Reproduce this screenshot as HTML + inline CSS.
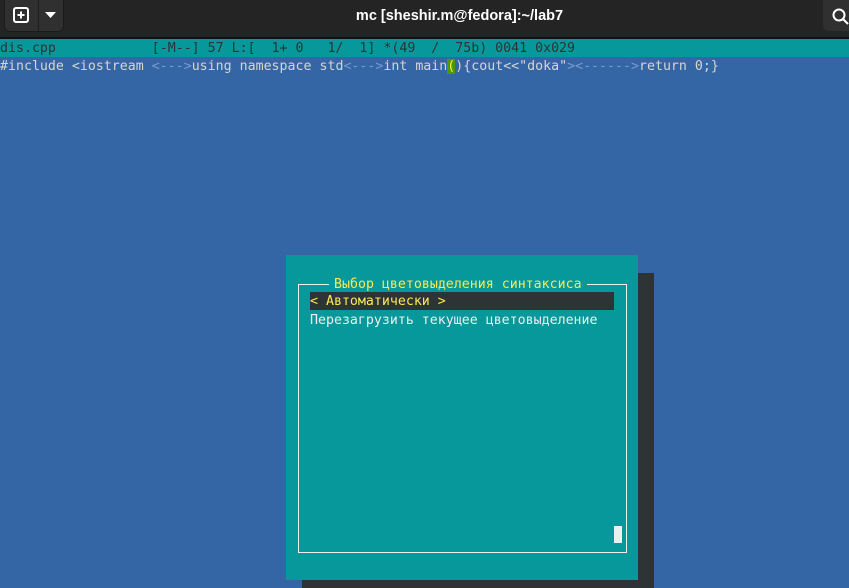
<!DOCTYPE html>
<html><head><meta charset="utf-8"><style>
body{margin:0;width:849px;height:588px;overflow:hidden;background:#3465a4;position:relative;font-family:"DejaVu Sans Mono","Liberation Mono",monospace;font-size:13.27px;}
.hdr{position:absolute;left:0;top:0;width:849px;height:37px;background:#242424;border-bottom:2px solid #111;}
.t{position:absolute;white-space:pre;line-height:18px;}
.ab{color:#729fcf}
</style></head><body>
<div class="hdr">
 <div style="position:absolute;left:4px;top:0;width:58px;height:31px;background:#303030;border-radius:0 0 6px 6px;border:1px solid #1a1a1a;border-top:none"></div>
 <div style="position:absolute;left:38px;top:0;width:1px;height:31px;background:#1e1e1e"></div>
 <svg style="position:absolute;left:13px;top:7px" width="16" height="16"><rect x="1" y="1" width="14" height="14" rx="2" fill="none" stroke="#fff" stroke-width="2"/><path d="M8 4.5v7M4.5 8h7" stroke="#fff" stroke-width="2"/></svg>
 <svg style="position:absolute;left:45px;top:12px" width="12" height="7"><path d="M0 0h11L5.5 6z" fill="#fff"/></svg>
 <div style="position:absolute;left:0;width:849px;top:8px;text-align:center;font-family:'Liberation Sans',sans-serif;font-weight:bold;font-size:14.5px;color:#fff;padding-left:70px;box-sizing:border-box;">mc [sheshir.m@fedora]:~/lab7</div>
 <div style="position:absolute;left:823px;top:0;width:40px;height:31px;background:#303030;border-radius:0 0 0 6px"></div>
 <svg style="position:absolute;left:832px;top:8px" width="17" height="17"><circle cx="7" cy="7" r="5.5" fill="none" stroke="#fff" stroke-width="2"/><path d="M11 11l5 5" stroke="#fff" stroke-width="2"/></svg>
</div>
<div style="position:absolute;left:0;top:39px;width:849px;height:18px;background:#06989a"></div>
<div class="t" style="left:0;top:40px;color:#2e3436">dis.cpp            [-M--] 57 L:[  1+ 0   1/  1] *(49  /  75b) 0041 0x029</div>
<div class="t" style="left:0;top:58px;color:#d3d7cf">#include &lt;iostream <span class="ab">&lt;---&gt;</span>using namespace std<span class="ab">&lt;---&gt;</span>int main<span style="background:#4e9a06;color:#fce94f">(</span>){cout&lt;&lt;"doka"<span class="ab">&gt;&lt;------&gt;</span>return 0;}</div>
<div style="position:absolute;left:302px;top:273px;width:352px;height:315px;background:#2e3436"></div>
<div style="position:absolute;left:286px;top:255px;width:352px;height:325px;background:#06989a"></div>
<div style="position:absolute;left:298px;top:284px;width:327px;height:267px;border:1.5px solid #eeeeec;box-sizing:content-box"></div>
<div class="t" style="left:329px;top:276px;background:#06989a;color:#fce94f;padding:0 5px">Выбор цветовыделения синтаксиса</div>
<div style="position:absolute;left:310px;top:292px;width:304px;height:18px;background:#2e3436"></div>
<div class="t" style="left:310px;top:293px;color:#fce94f">&lt; Автоматически &gt;</div>
<div class="t" style="left:310px;top:312px;color:#eeeeec">Перезагрузить текущее цветовыделение</div>
<div style="position:absolute;left:614px;top:526px;width:8px;height:17px;background:#eeeeec"></div>
</body></html>
